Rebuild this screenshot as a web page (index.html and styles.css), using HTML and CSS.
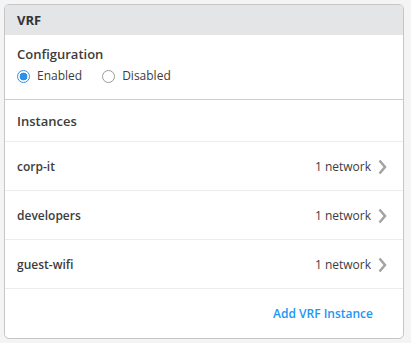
FILE: index.html
```html
<!DOCTYPE html>
<html lang="en">
<head>
  <meta charset="UTF-8" />
  <title>VRF</title>
  <link rel="stylesheet" href="styles.css">
</head>
<body>
  <div class="card">
    <div class="card-header">VRF</div>

    <div class="config">
      <div class="config-title">Configuration</div>
      <div class="radios">
        <label class="radio"><span class="dot checked"></span>Enabled</label>
        <label class="radio"><span class="dot"></span>Disabled</label>
      </div>
    </div>

    <div class="instances-title">Instances</div>

    <div class="row">
      <span class="name">corp-it</span>
      <span class="meta">1 network
        <svg class="chev" width="9" height="16" viewBox="0 0 9 16"><path d="M1.5 1.5 L7 8 L1.5 14.5" fill="none" stroke="#a3a3a3" stroke-width="2.5"/></svg>
      </span>
    </div>
    <div class="row">
      <span class="name">developers</span>
      <span class="meta">1 network
        <svg class="chev" width="9" height="16" viewBox="0 0 9 16"><path d="M1.5 1.5 L7 8 L1.5 14.5" fill="none" stroke="#a3a3a3" stroke-width="2.5"/></svg>
      </span>
    </div>
    <div class="row">
      <span class="name">guest-wifi</span>
      <span class="meta">1 network
        <svg class="chev" width="9" height="16" viewBox="0 0 9 16"><path d="M1.5 1.5 L7 8 L1.5 14.5" fill="none" stroke="#a3a3a3" stroke-width="2.5"/></svg>
      </span>
    </div>

    <div class="card-footer">
      <a href="#" class="add-link">Add VRF Instance</a>
    </div>
  </div>
</body>
</html>
```

FILE: styles.css
```css
body {
  margin: 0;
  padding: 4px;
  background: #f4f4f4;
  font-family: 'Open Sans', sans-serif;
  font-size: 12px;
  color: #3c3c3c;
}

/* card frame */
.card {
  width: 400px;
  box-sizing: border-box;
  background: white;
  border: 1px solid #c6c6c6;
  border-radius: 5px;
  overflow: hidden;
}

.card-header {
  height: 30px;
  line-height: 30px;
  padding: 0 12px;
  background: #e4e5e7;
  font-size: 13px;
  font-weight: 700;
  color: #333;
}

/* configuration section */
.config {
  height: 65px;
  box-sizing: border-box;
  padding: 10px 12px 0;
  border-bottom: 1px solid #cfcfcf;
}

.config-title {
  font-size: 13px;
  font-weight: 600;
  line-height: 18px;
}

.radios {
  display: flex;
  gap: 20px;
  margin-top: 4px;
}

.radio {
  display: flex;
  align-items: center;
  gap: 7px;
  line-height: 18px;
}

.dot {
  width: 13px;
  height: 13px;
  box-sizing: border-box;
  border: 1px solid #9a9a9a;
  border-radius: 50%;
  background: white;
}

.dot.checked {
  border-color: #2f8ee5;
  background: radial-gradient(circle, #2f8ee5 0 3.6px, white 4.2px);
}

/* instance list */
.instances-title {
  height: 41px;
  line-height: 42px;
  padding: 0 12px;
  font-size: 13px;
  font-weight: 600;
  border-bottom: 1px solid #ececec;
}

.row {
  height: 48px;
  display: flex;
  align-items: center;
  justify-content: space-between;
  padding: 1px 16px 0 12px;
  box-sizing: border-box;
  height: 49px;
  border-bottom: 1px solid #ececec;
}

.name {
  font-weight: 600;
}

.meta {
  display: flex;
  align-items: center;
  gap: 7px;
}

.card-footer {
  height: 49px;
  display: flex;
  align-items: center;
  justify-content: flex-end;
  padding-right: 30px;
}

.add-link {
  color: #2196f3;
  font-weight: 600;
  text-decoration: none;
}
```
